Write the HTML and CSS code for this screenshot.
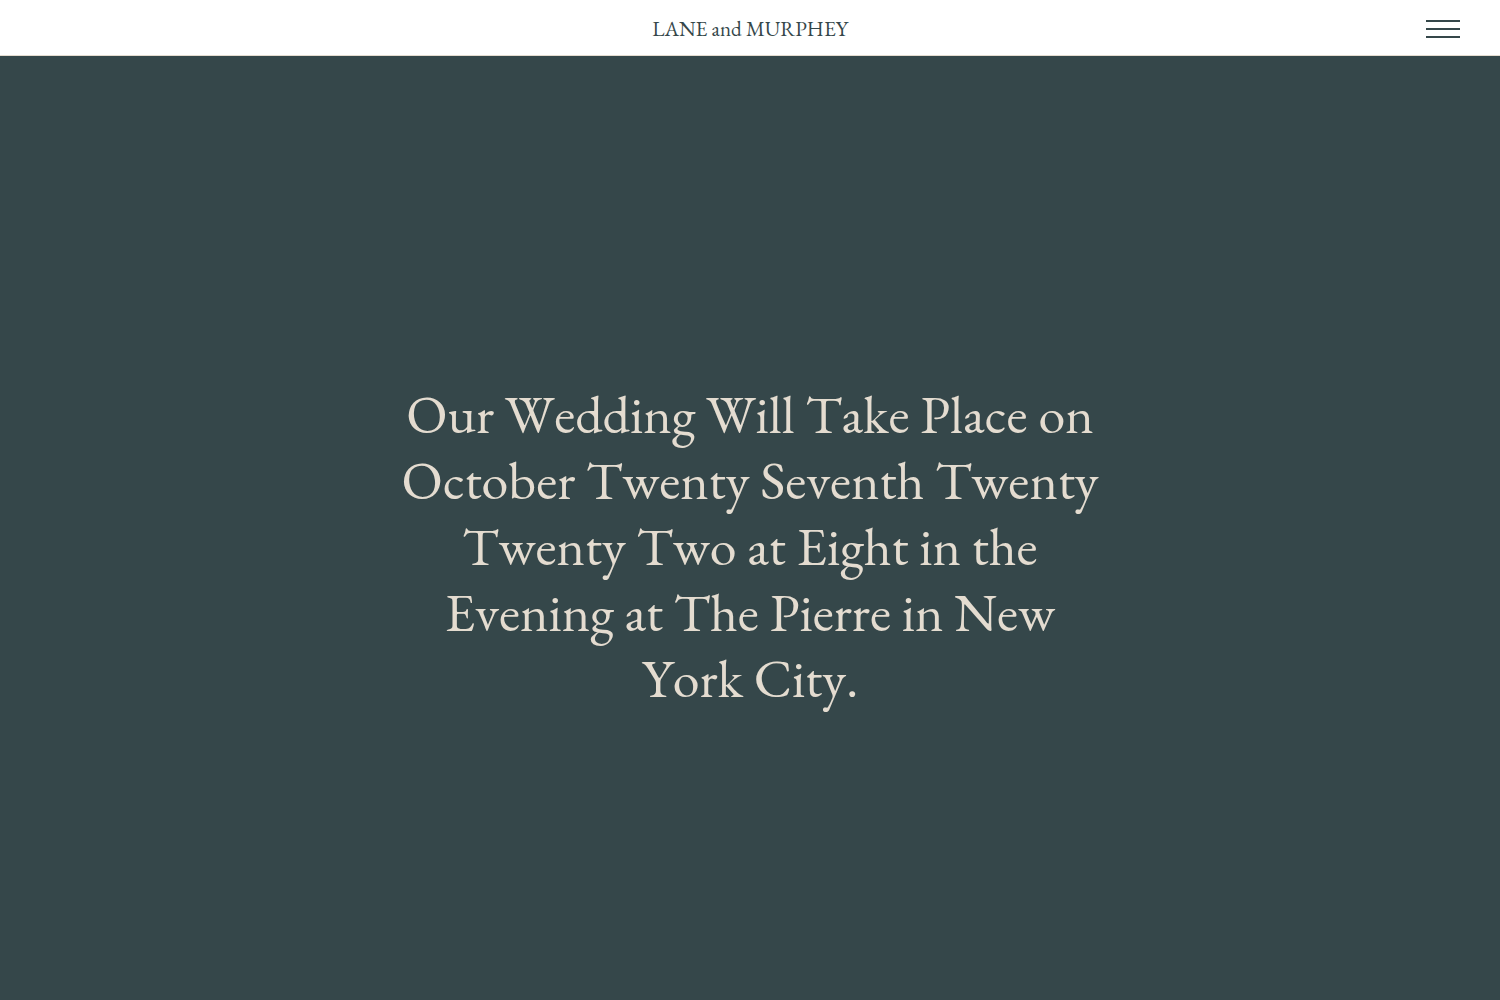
FILE: index.html
```html
<!DOCTYPE html>
<html lang="en">
<head>
    <meta charset="UTF-8">
    <meta name="viewport" content="width=device-width, initial-scale=1.0">
    <title>Lane and Murphey</title>
    <link rel="stylesheet" href="styles.css">
</head>
<body>
    <header class="site-header">
        <a class="site-title" href="#">LANE and MURPHEY</a>
        <button class="menu-toggle" type="button" aria-label="Open menu">
            <span></span>
            <span></span>
            <span></span>
        </button>
    </header>
    <main class="hero">
        <h1>Our Wedding Will Take Place on October Twenty Seventh Twenty Twenty Two at Eight in the Evening at The Pierre in New York City.</h1>
    </main>
</body>
</html>
```
FILE: styles.css
```css
* {
    box-sizing: border-box;
}
body {
    margin: 0;
    min-height: 100vh;
    display: flex;
    flex-direction: column;
    font-family: "EB Garamond", "Cormorant Garamond", "Liberation Serif", serif;
    background: #35474a;
}
.site-header {
    display: grid;
    grid-template-columns: 1fr auto 1fr;
    align-items: center;
    height: 56px;
    padding: 2px 40px 0;
    background: #fff;
    border-bottom: 1px solid #e4dcd0;
}
.site-title {
    grid-column: 2;
    font-size: 21px;
    line-height: 24px;
    color: #35474a;
    text-decoration: none;
}
.menu-toggle {
    justify-self: end;
    display: flex;
    flex-direction: column;
    gap: 6px;
    width: 34px;
    padding: 0;
    border: none;
    background: none;
    cursor: pointer;
}
.menu-toggle span {
    height: 2px;
    background: #35474a;
}
.hero {
    flex: 1;
    display: flex;
    align-items: center;
    justify-content: center;
    padding: 76px 40px 40px;
}
.hero h1 {
    max-width: 700px;
    margin: 0;
    font-size: 54px;
    font-weight: 400;
    font-kerning: none;
    font-variant-ligatures: none;
    line-height: 66px;
    text-align: center;
    color: #e4dcd0;
}
```
